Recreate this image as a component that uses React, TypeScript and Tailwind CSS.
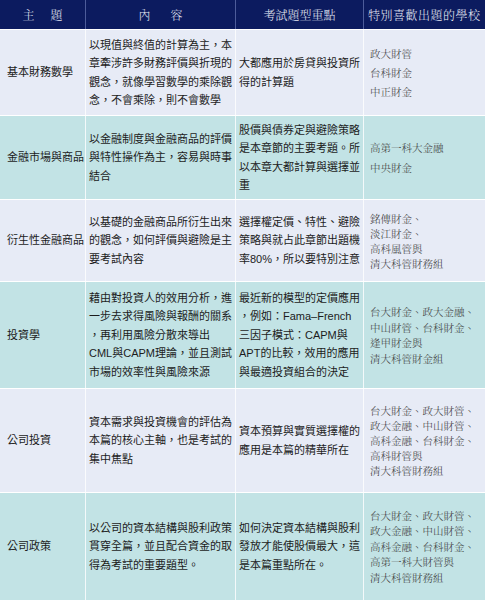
const rows = [
  {
    topic: "基本財務數學",
    content: ["以現值與終值的計算為主，本", "章牽涉許多財務評價與折現的", "觀念，就像學習數學的乘除觀", "念，不會乘除，則不會數學"],
    focus: ["大都應用於房貸與投資所", "得的計算題"],
    schools: ["政大財管", "台科財金", "中正財金"],
    h: "h-[86px]",
    lh: "leading-[19px]",
  },
  {
    topic: "金融市場與商品",
    content: ["以金融制度與金融商品的評價", "與特性操作為主，容易與時事", "結合"],
    focus: ["股價與債券定與避險策略", "是本章節的主要考題。所", "以本章大都計算與選擇並", "重"],
    schools: ["高第一科大金融", "中央財金"],
    h: "h-[84px]",
    lh: "leading-[20px]",
  },
  {
    topic: "衍生性金融商品",
    content: ["以基礎的金融商品所衍生出來", "的觀念，如何評價與避險是主", "要考試內容"],
    focus: ["選擇權定價、特性、避險", "策略與就占此章節出題機", "率80%，所以要特別注意"],
    schools: ["銘傳財金、", "淡江財金、", "高科風管與", "清大科管財務組"],
    h: "h-[82px]",
    lh: "leading-[15px]",
  },
  {
    topic: "投資學",
    content: ["藉由對投資人的效用分析，進", "一步去求得風險與報酬的關系", "，再利用風險分散來導出", "CML與CAPM理論，並且測試", "市場的效率性與風險來源"],
    focus: ["最近新的模型的定價應用", "，例如：Fama–French", "三因子模式：CAPM與", "APT的比較，效用的應用", "與最適投資組合的決定"],
    schools: ["台大財金、政大金融、", "中山財管、台科財金、", "逢甲財金與", "清大科管財金組"],
    h: "h-[107px]",
    lh: "leading-[15.5px]",
  },
  {
    topic: "公司投資",
    content: ["資本需求與投資機會的評估為", "本篇的核心主軸，也是考試的", "集中焦點"],
    focus: ["資本預算與實質選擇權的", "應用是本篇的精華所在"],
    schools: ["台大財金、政大財管、", "政大金融、中山財管、", "高科金融、台科財金、", "高科財管與", "清大科管財務組"],
    h: "h-[104px]",
    lh: "leading-[15px]",
  },
  {
    topic: "公司政策",
    content: ["以公司的資本結構與股利政策", "貫穿全篇，並且配合資金的取", "得為考試的重要題型。"],
    focus: ["如何決定資本結構與股利", "發放才能使股價最大，這", "是本篇重點所在。"],
    schools: ["台大財金、政大財管、", "政大金融、中山財管、", "高科金融、台科財金、", "高第一科大財管與", "清大科管財務組"],
    h: "h-[108px]",
    lh: "leading-[15.5px]",
  },
];

const sans = "font-['Liberation_Sans','Noto_Sans_CJK_TC',sans-serif]";
const serif = "font-['Noto_Serif_CJK_TC','Noto_Sans_CJK_TC',serif]";

const Lines = ({ lines }: { lines: string[] }) => (
  <div>
    {lines.map((l, i) => (
      <div key={i} className="whitespace-nowrap">
        {l}
      </div>
    ))}
  </div>
);

export default function App() {
  return (
    <div className="w-[487px] h-[600px] bg-white overflow-hidden">
      <div className="w-[485px]">
        {/* header */}
        <div className={`grid grid-cols-[86px_150px_128px_121px] h-[29px] bg-[#0c1b5f] text-[#e4e8f4] text-[12px] font-light ${serif}`}>
          <div className="flex items-center justify-center gap-[16px] border-r border-[#4d5c9a]">
            <span>主</span>
            <span>題</span>
          </div>
          <div className="flex items-center justify-center gap-[20px] border-r border-[#4d5c9a]">
            <span>內</span>
            <span>容</span>
          </div>
          <div className="flex items-center justify-center border-r border-[#4d5c9a]">考試題型重點</div>
          <div className="flex items-center pl-[4px] tracking-[0.5px] whitespace-nowrap">特別喜歡出題的學校</div>
        </div>

        {rows.map((r, i) => (
          <div
            key={i}
            className={`grid grid-cols-[86px_150px_128px_121px] border-t border-white ${r.h} ${
              i % 2 === 0 ? "bg-[#e7ebf6]" : "bg-[#c2e3e5]"
            }`}
          >
            <div className={`flex items-center pl-[7px] border-r border-white/80 text-[11px] text-[#1c1c1c] whitespace-nowrap ${sans}`}>
              {r.topic}
            </div>
            <div className={`flex items-center pl-[3px] border-r border-white/80 text-[11px] leading-[18.5px] text-[#1c1c1c] ${sans}`}>
              <Lines lines={r.content} />
            </div>
            <div className={`flex items-center pl-[3px] border-r border-white/80 text-[11px] leading-[18.5px] text-[#1c1c1c] ${sans}`}>
              <Lines lines={r.focus} />
            </div>
            <div className={`flex items-center pl-[6px] text-[10.5px] font-light text-[#3a3a3a] ${r.lh} ${serif}`}>
              <Lines lines={r.schools} />
            </div>
          </div>
        ))}
      </div>
    </div>
  );
}
